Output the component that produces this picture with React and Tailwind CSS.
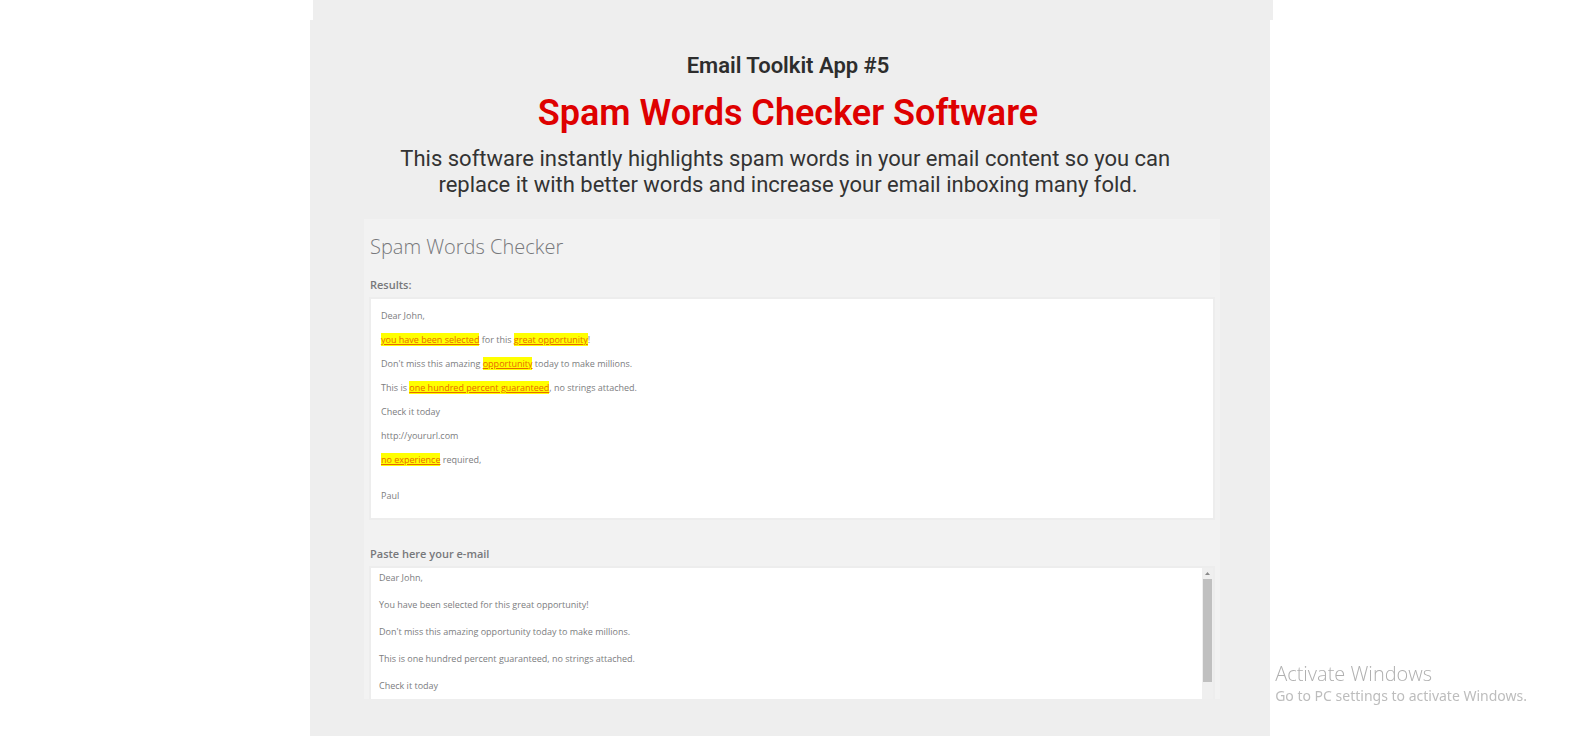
import { useState } from "react";

const RESULTS = [
  [{ text: "Dear John," }],
  [
    { text: "you have been selected", spam: true },
    { text: " for this " },
    { text: "great opportunity", spam: true },
    { text: "!" },
  ],
  [
    { text: "Don't miss this amazing " },
    { text: "opportunity", spam: true },
    { text: " today to make millions." },
  ],
  [
    { text: "This is " },
    { text: "one hundred percent guaranteed", spam: true },
    { text: ", no strings attached." },
  ],
  [{ text: "Check it today" }],
  [{ text: "http://yoururl.com" }],
  [{ text: "no experience", spam: true }, { text: " required," }],
];

const EMAIL = [
  "Dear John,",
  "You have been selected for this great opportunity!",
  "Don't miss this amazing opportunity today to make millions.",
  "This is one hundred percent guaranteed, no strings attached.",
  "Check it today",
].join("\n");

function SpamChecker() {
  const [email, setEmail] = useState(EMAIL);

  return (
    <div className="bg-[#f2f2f2] px-[5px] pt-3 font-['Open_Sans',sans-serif] text-[#7c7d80]">
      <h3 className="pl-px text-[20px] leading-8 font-light text-[#77787b]">Spam Words Checker</h3>

      <h4 className="mt-3 pl-px text-[11px] leading-5 font-semibold text-[#77787b]">Results:</h4>
      <div className="mt-[2px] border-2 border-[#ededed] bg-white px-[10px] pt-[5px] pb-[10px] text-[9px] leading-6">
        {RESULTS.map((line, i) => (
          <p key={i}>
            {line.map((part, j) =>
              part.spam ? (
                <mark key={j} className="bg-[#ffff00] text-[#e86a00] underline">
                  {part.text}
                </mark>
              ) : (
                <span key={j}>{part.text}</span>
              )
            )}
          </p>
        ))}
        <p className="mt-3">Paul</p>
      </div>

      <label
        htmlFor="email"
        className="mt-6 block pl-px text-[11px] leading-5 font-semibold text-[#77787b]"
      >
        Paste here your e-mail
      </label>
      <div className="mt-[2px] flex overflow-hidden border-2 border-b-0 border-[#ededed] bg-white">
        <textarea
          id="email"
          value={email}
          onChange={(e) => setEmail(e.target.value)}
          className="-mt-1 block h-[135px] flex-1 resize-none overflow-hidden px-2 text-[9px] leading-[27px] outline-none"
        />
        <div className="flex w-[11px] flex-col items-center bg-[#efefef]">
          <svg viewBox="0 0 9 11" className="h-[11px] w-[9px]">
            <path d="M2 7 4.5 4 7 7Z" fill="#8a8a8a" />
          </svg>
          <div className="h-[103px] w-[9px] bg-[#c0c0c0]" />
        </div>
      </div>
    </div>
  );
}

export default function App() {
  return (
    <div className="flex min-h-screen flex-col bg-white pr-px font-[Roboto,sans-serif] text-[#2d2d2d]">
      <div className="pl-[6px]">
        <div className="mx-auto h-5 max-w-[960px] bg-[#eeeeee]" />
      </div>

      <section className="mx-auto w-full max-w-[960px] flex-1 bg-[#eeeeee] pt-[33px] pr-[50px] pl-[54px]">
        <header className="pr-2 text-center">
          <p className="text-[22px] leading-[26px] font-semibold">Email Toolkit App #5</p>
          <h2 className="mt-3 text-[36px] leading-[44px] font-semibold text-[#de0000]">
            Spam Words Checker Software
          </h2>
          <p className="mt-[11px] text-[22px] leading-[26px] text-[#333333]">
            This software instantly highlights spam words in your email content so you can&nbsp;
            <br />
            replace it with better words and increase your email inboxing many fold.
          </p>
        </header>

        <div className="mt-[21px]">
          <SpamChecker />
        </div>
      </section>

      <aside className="fixed right-[54px] bottom-[30px] text-[#bdbdbd]">
        <p className="font-['Open_Sans',sans-serif] text-[20px] leading-6 font-light text-[#b0b0b0]">
          Activate Windows
        </p>
        <p className="font-['Noto_Sans',sans-serif] text-[14px] leading-5">
          Go to PC settings to activate Windows.
        </p>
      </aside>
    </div>
  );
}
